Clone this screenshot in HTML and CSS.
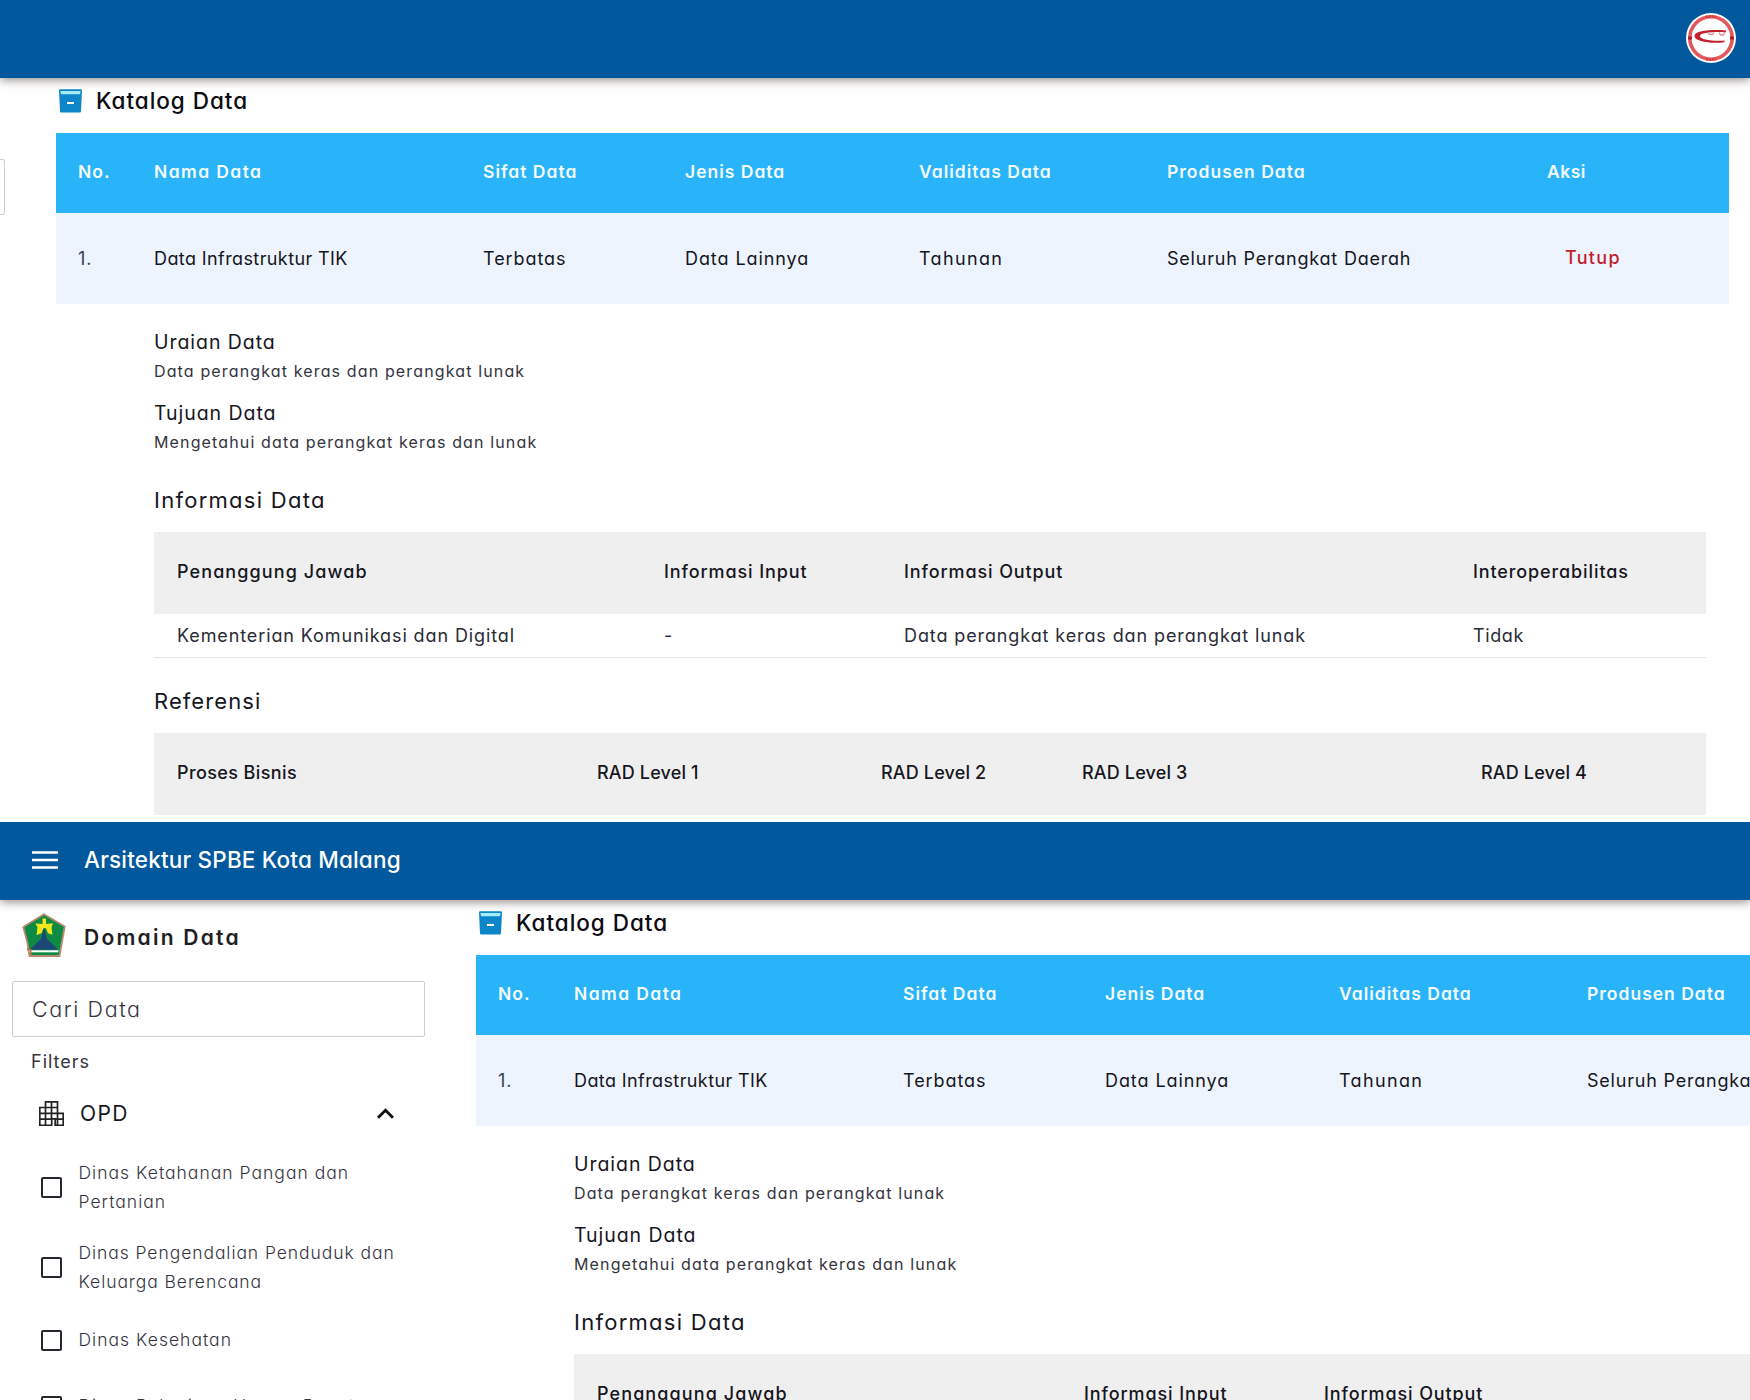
FILE: index.html
```
<!DOCTYPE html>
<html lang="id">
<head>
<meta charset="utf-8">
<title>Arsitektur SPBE Kota Malang</title>
<link rel="stylesheet" href="styles.css">
</head>
<body>

<section class="screen screen-end">
  <header class="topbar topbar-end">
    <svg class="avatar" viewBox="0 0 50 50">
      <circle cx="25" cy="25" r="25" fill="#fff"/>
      <circle cx="25" cy="25" r="21.2" fill="none" stroke="#e2565c" stroke-width="3.600"/>
      <path d="M20 3.900a21.500 21.500 0 0 1 10 0M20 46.100a21.500 21.500 0 0 0 10 0" fill="none" stroke="#d93a42" stroke-width="2.500" stroke-dasharray="2 1"/>
      <path d="M2 25h4M44 25h4" stroke="#b0202c" stroke-width="3"/>
      <path d="M40 17.500C28 16.500 9 17 8.500 23c-.3 5.500 17 8 30 6.200v-1.700c-11 .8-24.500-.5-24.500-4.500C14 19.500 27 18.700 40 19.200z" fill="#c4202e"/>
      <path d="M22 19.500l1.500 2.200h3l1.500-2M33 19.500l1.500 2.500h3l1-3" fill="none" stroke="#e58a90" stroke-width="1.300"/>
    </svg>
  </header>
  <div class="body">
    <div class="search search-edge"></div>
    <main class="catalog">
      <h1 class="title">
        <svg class="archive" viewBox="0 0 24 24"><path d="M.5 1.500Q.5.3 1.700.3h20.600q1.200 0 1.200 1.200L22.500 22.300q0 1.200-1.200 1.200H2.700q-1.200 0-1.200-1.200z" fill="#0d86c9"/><path d="M1.800 2h20.400l-.8 3.200H2.600z" fill="#a5ecfb"/><path d="M8.500 13h7v2h-7z" fill="#fff"/></svg>
        <span>Katalog Data</span>
      </h1>
      <div class="row row-head">
        <span>No.</span><span class="s-nama">Nama Data</span><span>Sifat Data</span><span>Jenis Data</span><span>Validitas Data</span><span>Produsen Data</span><span class="s-aksi">Aksi</span>
      </div>
      <div class="row row-item">
        <span class="num">1.</span><span class="s-infra">Data Infrastruktur TIK</span><span>Terbatas</span><span>Data Lainnya</span><span class="s-tahun">Tahunan</span><span class="s-prod">Seluruh Perangkat Daerah</span><a class="close">Tutup</a>
      </div>
      <div class="detail">
        <h3>Uraian Data</h3>
        <p>Data perangkat keras dan perangkat lunak</p>
        <h3 class="next">Tujuan Data</h3>
        <p>Mengetahui data perangkat keras dan lunak</p>
        <h2>Informasi Data</h2>
        <div class="sub info sub-head"><span class="s-pj">Penanggung Jawab</span><span>Informasi Input</span><span>Informasi Output</span><span>Interoperabilitas</span></div>
        <div class="sub info sub-item"><span>Kementerian Komunikasi dan Digital</span><span>-</span><span>Data perangkat keras dan perangkat lunak</span><span class="s-tidak">Tidak</span></div>
        <h2 class="ref-title">Referensi</h2>
        <div class="sub refs sub-head"><span class="s-pb">Proses Bisnis</span><span>RAD Level 1</span><span>RAD Level 2</span><span>RAD Level 3</span><span>RAD Level 4</span></div>
      </div>
    </main>
  </div>
</section>

<section class="screen screen-start">
  <header class="topbar">
    <svg class="menu" viewBox="0 0 26 18"><path d="M0 1.500h26M0 9h26M0 16.500h26" stroke="#fff" stroke-width="2.700"/></svg>
    <span class="app-name">Arsitektur SPBE Kota Malang</span>
  </header>
  <div class="body">
    <aside class="sidebar">
      <div class="brand">
        <svg class="crest" viewBox="0 0 44 44">
          <path d="M22 1.200 42.700 13.500 37.500 43h-30L5.500 30 1.300 14z" fill="#0d8a43" stroke="#b98a72" stroke-width="1.800" stroke-linejoin="round"/>
          <path d="M20.500 5.500h3.500V11l7-.8-1.500 4 1 7.500-4.500-1.500-2-5h-2.500l-2 5L14.500 22l1-7.500-2-4 7 .5z" fill="#f4e61c"/>
          <path d="M22 14.500 25 26 36 36.500H8L19 26z" fill="#1d4678"/>
          <path d="M7 37.300h29.500v2H7z" fill="#fff"/>
          <path d="M5 36l3.500 1v5.500" fill="none" stroke="#b9794f" stroke-width="2"/>
        </svg>
        <span>Domain Data</span>
      </div>
      <div class="search">Cari Data</div>
      <div class="filters">Filters</div>
      <div class="group">
        <svg class="building" viewBox="0 0 25 25" fill="none" stroke="#222" stroke-width="1.700"><path d="M6.500 6.500V.8h12v11.500h5.700v12h-8v-6.500h-3.500v6.500H.8V6.500h6M6.500 6.500v17.500M12.500.8v17M18.500 12.300v12M.8 12.300h17.700M.8 18.200h12M16.200 18.200h8M6.500 6.500h12"/></svg>
        <span>OPD</span>
        <svg class="chevron" viewBox="0 0 17 11"><path d="M1 9.700l7.500-7.500L16 9.700" fill="none" stroke="#111" stroke-width="2.900"/></svg>
      </div>
      <label class="option"><i class="box"></i><span>Dinas Ketahanan Pangan dan<br>Pertanian</span></label>
      <label class="option"><i class="box"></i><span class="s-duk">Dinas Pengendalian Penduduk dan<br>Keluarga Berencana</span></label>
      <label class="option"><i class="box"></i><span>Dinas Kesehatan</span></label>
      <label class="option"><i class="box"></i><span>Dinas Pekerjaan Umum, Penataan</span></label>
    </aside>
    <main class="catalog">
      <h1 class="title">
        <svg class="archive" viewBox="0 0 24 24"><path d="M.5 1.500Q.5.3 1.700.3h20.600q1.200 0 1.200 1.200L22.500 22.300q0 1.200-1.200 1.200H2.700q-1.200 0-1.200-1.200z" fill="#0d86c9"/><path d="M1.800 2h20.400l-.8 3.200H2.600z" fill="#a5ecfb"/><path d="M8.500 13h7v2h-7z" fill="#fff"/></svg>
        <span>Katalog Data</span>
      </h1>
      <div class="row row-head">
        <span>No.</span><span class="s-nama">Nama Data</span><span>Sifat Data</span><span>Jenis Data</span><span>Validitas Data</span><span>Produsen Data</span><span class="s-aksi">Aksi</span>
      </div>
      <div class="row row-item">
        <span class="num">1.</span><span class="s-infra">Data Infrastruktur TIK</span><span>Terbatas</span><span>Data Lainnya</span><span class="s-tahun">Tahunan</span><span class="s-prod">Seluruh Perangkat Daerah</span><a class="close">Tutup</a>
      </div>
      <div class="detail">
        <h3>Uraian Data</h3>
        <p>Data perangkat keras dan perangkat lunak</p>
        <h3 class="next">Tujuan Data</h3>
        <p>Mengetahui data perangkat keras dan lunak</p>
        <h2>Informasi Data</h2>
        <div class="sub info sub-head"><span class="s-pj">Penanggung Jawab</span><span>Informasi Input</span><span>Informasi Output</span><span>Interoperabilitas</span></div>
      </div>
    </main>
  </div>
</section>

</body>
</html>
```
FILE: styles.css
```
* { box-sizing: border-box; }

body {
  margin: 0;
  width: 1750px;
  height: 1400px;
  overflow: hidden;
  background: #fff;
  color: #16161e;
  font-family: Inter, "Open Sans", sans-serif;
  font-feature-settings: "cv11";
}

h1, h2, h3, p { margin: 0; font-weight: 400; }
svg { display: block; flex: none; }

.screen { overflow: hidden; background: #fff; }
.screen-end { height: 822px; }
.screen-start { height: 578px; }

.topbar {
  position: relative;
  display: flex;
  align-items: center;
  height: 78px;
  padding: 0 0 2px 32px;
  background: #01589d;
  box-shadow: 0 2px 9px rgba(40, 25, 20, .5);
  color: #fff;
}
.topbar-end { justify-content: flex-end; padding: 0 14px 3px 0; }
.avatar { width: 50px; height: 50px; }
.menu { width: 26px; height: 18px; }
.app-name { margin-left: 26px; font-size: 22.5px; font-weight: 500; letter-spacing: .18px; line-height: 32px; }

.body { display: flex; align-items: flex-start; }
.screen-end .body { width: 1729px; }
.screen-start .body { width: 2149px; }

/* Catalog */
.catalog { flex: none; width: 1673px; padding-top: 7px; }
.title { display: flex; align-items: center; height: 32px; margin-bottom: 16px; padding-left: 2px; color: #0c0c12; font-size: 22.5px; font-weight: 500; letter-spacing: .96px; }
.title span { padding-bottom: 2px; }
.archive { width: 25px; height: 24px; margin-right: 13px; }

.row {
  display: grid;
  grid-template-columns: 76px 329px 202px 234px 248px 380px 1fr;
  align-items: center;
  padding-left: 22px;
  white-space: nowrap;
}
.row-head { height: 79.5px; padding-bottom: 3px; background: #29b4fa; color: #f4fbff; font-size: 17.5px; font-weight: 600; letter-spacing: 1px; }
.row-item { height: 91px; padding-top: 1px; background: #edf4fd; font-size: 18px; letter-spacing: .92px; }
.num { color: #3a3f52; }
.close { margin: -2px 0 0 18px; color: #c41e2e; font-weight: 500; letter-spacing: 1.3px; }
.s-nama { letter-spacing: 1.4px; }
.s-aksi { letter-spacing: .5px; }
.s-infra { letter-spacing: .4px; }
.s-tahun { letter-spacing: 1.35px; }
.s-prod { letter-spacing: .79px; }

.detail { width: 1650px; padding: 24px 0 0 98px; }
.detail h3 { font-size: 19.5px; line-height: 28px; letter-spacing: .95px; }
.detail h3.next { margin-top: 12px; }
.detail p { color: #33343e; font-size: 16px; line-height: 31px; letter-spacing: 1.14px; }
.detail p + h2 { padding-top: 1px; }
.detail h2 { margin: 25px 0 16px; font-size: 22px; line-height: 32px; letter-spacing: 1.27px; }
.detail h2.ref-title { margin: 27px 0 16px; letter-spacing: 1.07px; }

.sub { display: grid; align-items: center; padding-left: 23px; white-space: nowrap; font-size: 18px; }
.info { grid-template-columns: 487px 240px 569px 1fr; letter-spacing: .89px; }
.refs { grid-template-columns: 420px 284px 201px 1fr 225px; letter-spacing: .15px; }
.sub-head { height: 82px; padding-bottom: 3px; background: #eeefee; font-weight: 500; }
.sub-item { height: 44.5px; border-bottom: 1px solid #e3e4e8; color: #2a2b36; letter-spacing: .89px; }
.s-pj { letter-spacing: 1.1px; }
.s-pb { letter-spacing: .4px; }
.s-tidak { letter-spacing: .6px; }

/* Sidebar */
.sidebar { flex: none; width: 476px; padding-left: 12px; }
.brand { display: flex; align-items: center; height: 75px; padding-left: 10px; color: #1e1e24; font-size: 21px; font-weight: 600; letter-spacing: 2.25px; }
.crest { width: 44px; height: 44px; margin: -5px 18px 0 0; }
.search { width: 413px; height: 56px; margin-top: 6px; padding-left: 19px; border: 1px solid #c9cfd6; border-radius: 2px; color: #34343e; font-size: 21.5px; font-weight: 300; line-height: 54px; letter-spacing: 1.6px; }
.search-edge { flex: none; width: 5px; margin: 81px 51px 0 0; padding: 0; border-left: 0; border-radius: 0 3px 3px 0; }
.filters { margin-top: 13px; padding-left: 19px; color: #34343e; font-size: 18px; line-height: 24px; letter-spacing: 1px; }
.group { display: flex; align-items: center; height: 30px; margin: 24px 0 20px; padding-left: 27px; font-size: 21px; letter-spacing: 1.4px; }
.building { width: 25px; height: 25px; margin-right: 16px; }
.chevron { width: 17px; height: 11px; margin-left: 248px; }
.option { display: flex; align-items: center; min-height: 66px; padding: 11px 0 11.600px 28.500px; color: #34343e; font-size: 17.5px; font-weight: 300; line-height: 28.7px; letter-spacing: 1.02px; white-space: nowrap; }
.s-duk { letter-spacing: .93px; }
.box { width: 21px; height: 21px; margin-right: 17px; border: 2px solid #26262c; border-radius: 2px; }
```
